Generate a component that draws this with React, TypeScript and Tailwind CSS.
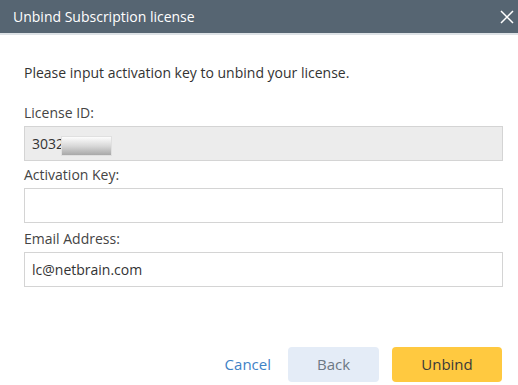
import React from 'react';

const font = { fontFamily: '"Open Sans", "Noto Sans", sans-serif' };

const Field = ({ label, value, disabled, className }: { label: string; value?: string; disabled?: boolean; className?: string }) => (
  <div className={className}>
    <div className="text-[14px] leading-[18px] text-[#444]">{label}</div>
    <div
      className={`relative mt-[4px] h-[35px] border border-[#d4d4d4] px-[7px] flex items-center text-[14px] text-[#333] ${
        disabled ? 'bg-[#ececec]' : 'bg-white'
      }`}
    >
      {value}
      {disabled && (
        <span className="absolute left-[36px] top-[9px] w-[51px] h-[20px] border border-[#e0e0e0] bg-gradient-to-b from-[#fdfdfd] via-[#d8d8d8] to-[#a8a8a8]" />
      )}
    </div>
  </div>
);

const App = () => {
  return (
    <div className="w-[518px] h-[385px] bg-white flex flex-col" style={font}>
      <div className="h-[35px] bg-[#566572] border-b-2 border-[#dde2e6] flex items-center justify-between pl-[13px] pr-[4px]">
        <span className="text-[14px] text-white">Unbind Subscription license</span>
        <svg width="14" height="14" viewBox="0 0 14 14">
          <path d="M1 1 L13 13 M13 1 L1 13" stroke="#fff" strokeWidth="1.5" fill="none" />
        </svg>
      </div>

      <div className="pl-[24px] pr-[15px] pt-[29px] flex flex-col">
        <p className="text-[14px] leading-[18px] text-[#333]">Please input activation key to unbind your license.</p>
        <Field className="mt-[22px]" label="License ID:" value="3032" disabled />
        <Field className="mt-[5px]" label="Activation Key:" />
        <Field className="mt-[7px]" label="Email Address:" value="lc@netbrain.com" />
      </div>

      <div className="mt-auto mb-[3px] pr-[16px] flex justify-end items-center gap-[13px]">
        <button className="px-[4px] text-[15px] text-[#3f82c6]">Cancel</button>
        <button className="w-[91px] h-[35px] rounded-[4px] bg-[#e4ecf7] text-[15px] text-[#6c7884]">Back</button>
        <button className="w-[110px] h-[35px] rounded-[4px] bg-[#ffc940] text-[15px] text-[#3a3a3a]">Unbind</button>
      </div>
    </div>
  );
};

export default App;
